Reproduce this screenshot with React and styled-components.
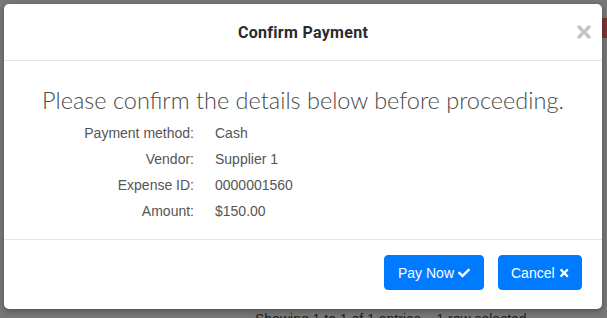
import React from "react";
import styled, { createGlobalStyle } from "styled-components";
import { FaCheck, FaTimes } from "react-icons/fa";

const Global = createGlobalStyle`
  html, body { margin: 0; padding: 0; }
  body { font-family: "Liberation Sans", Arial, sans-serif; background: #777; }
`;

const Page = styled.div`
  position: relative;
  width: 607px;
  height: 318px;
  overflow: hidden;
  background: #787878;
  box-sizing: border-box;
  padding: 4px 5px 0 4px;
`;

const Badge = styled.div`
  position: absolute;
  right: 0;
  top: 18px;
  width: 5px;
  height: 20px;
  background: #7d3434;
`;

const Modal = styled.div`
  position: relative;
  width: 598px;
  background: #fff;
  border-radius: 5px;
  box-shadow: 0 2px 6px rgba(0, 0, 0, 0.35);
  display: flex;
  flex-direction: column;
`;

const Header = styled.div`
  height: 56px;
  border-bottom: 1px solid #e5e5e5;
  display: flex;
  align-items: center;
  justify-content: center;
  position: relative;
`;

const Title = styled.h4`
  margin: 0;
  font-family: Roboto, "Liberation Sans", sans-serif;
  font-weight: 700;
  font-size: 16px;
  color: #2b2b2b;
  letter-spacing: 0.3px;
`;

const Close = styled.button`
  position: absolute;
  right: 8px;
  top: 18px;
  border: 0;
  background: none;
  padding: 0;
  color: #c6c6c6;
  display: flex;
  cursor: pointer;
  svg { width: 20px; height: 20px; }
`;

const Body = styled.div`
  padding: 25px 0 15px;
  display: flex;
  flex-direction: column;
`;

const Lead = styled.p`
  margin: 0 0 6px;
  text-align: center;
  font-family: Lato, sans-serif;
  font-weight: 300;
  font-size: 23.5px;
  line-height: 28px;
  color: #4a4a4a;
`;

const Details = styled.dl`
  margin: 0;
  display: grid;
  grid-template-columns: 190px 1fr;
  grid-auto-rows: 26px;
  column-gap: 21px;
  align-items: center;
  font-size: 14px;
  color: #555;
`;

const Label = styled.dt`
  text-align: right;
`;

const Value = styled.dd`
  margin: 0;
`;

const Footer = styled.div`
  border-top: 1px solid #e5e5e5;
  padding: 15px 20px 19px;
  display: flex;
  justify-content: flex-end;
  gap: 14px;
`;

const Button = styled.button`
  width: ${(p) => p.$width}px;
  height: 35px;
  padding: 0 12px;
  border: 1px solid #007bff;
  border-radius: 4px;
  background: #007bff;
  color: #fff;
  font-family: "Liberation Sans", Arial, sans-serif;
  font-size: 14px;
  display: inline-flex;
  align-items: center;
  justify-content: center;
  gap: 4px;
  cursor: pointer;
  svg { width: 12px; height: 12px; }
`;

const Behind = styled.div`
  margin: 2px 0 0 251px;
  font-size: 14px;
  color: #1e1e1e;
  white-space: pre;
`;

const rows = [
  ["Payment method:", "Cash"],
  ["Vendor:", "Supplier 1"],
  ["Expense ID:", "0000001560"],
  ["Amount:", "$150.00"],
];

export default function App() {
  return (
    <>
      <Global />
      <Page>
        <Badge />
        <Modal>
          <Header>
            <Title>Confirm Payment</Title>
            <Close aria-label="Close">
              <FaTimes />
            </Close>
          </Header>
          <Body>
            <Lead>Please confirm the details below before proceeding.</Lead>
            <Details>
              {rows.map(([l, v]) => (
                <React.Fragment key={l}>
                  <Label>{l}</Label>
                  <Value>{v}</Value>
                </React.Fragment>
              ))}
            </Details>
          </Body>
          <Footer>
            <Button $width={100}>
              Pay Now <FaCheck />
            </Button>
            <Button $width={84}>
              Cancel <FaTimes />
            </Button>
          </Footer>
        </Modal>
        <Behind>Showing 1 to 1 of 1 entries    1 row selected</Behind>
      </Page>
    </>
  );
}
